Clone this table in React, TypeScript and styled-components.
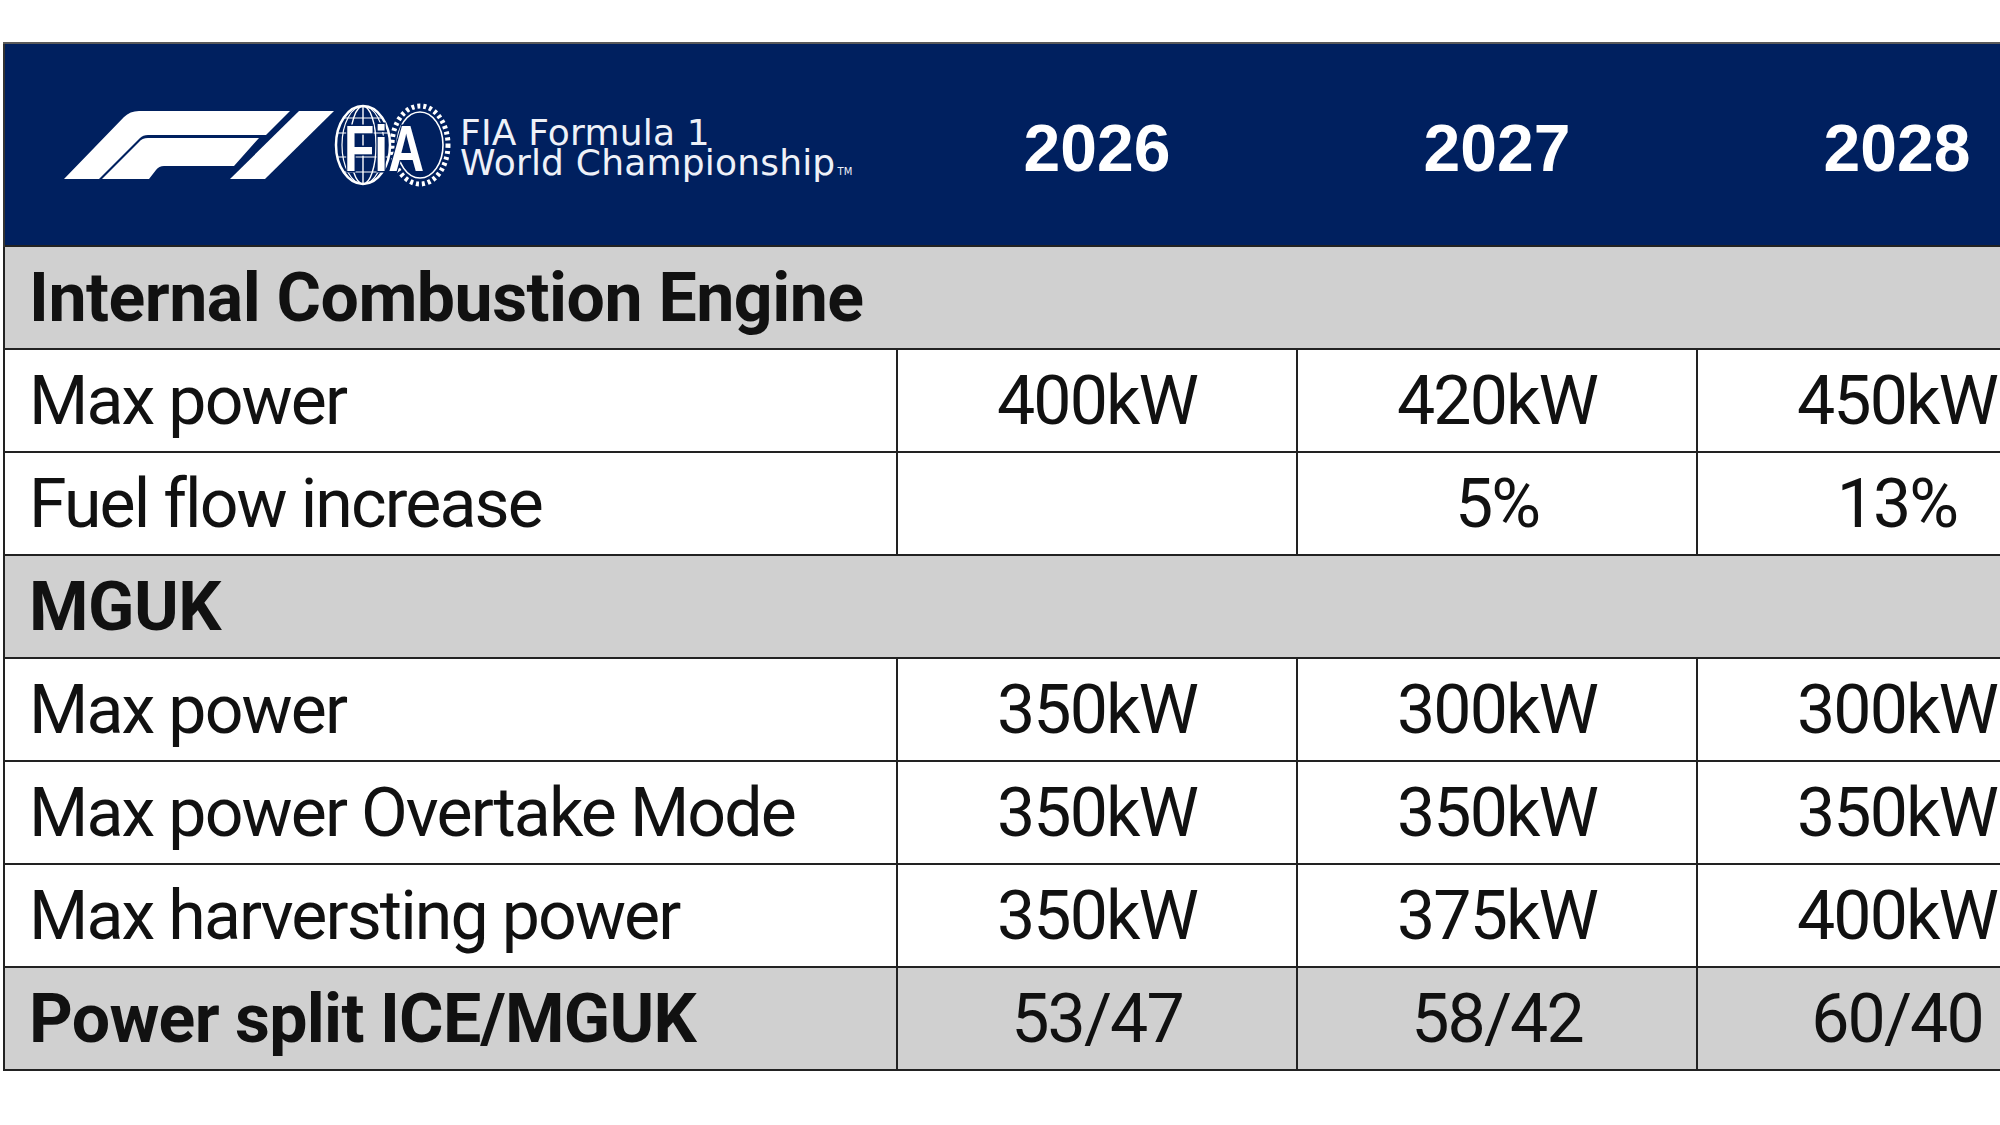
import React from 'react'
import styled, { createGlobalStyle } from 'styled-components'

const GlobalStyle = createGlobalStyle`
  html, body {
    margin: 0;
    padding: 0;
    background: #fff;
    overflow: hidden;
  }
`

const Page = styled.div`
  width: 2000px;
  height: 1125px;
  overflow: hidden;
  box-sizing: border-box;
  padding: 42px 0 0 3px;
`

const Table = styled.table`
  border-collapse: collapse;
  table-layout: fixed;
  width: 2093px;
  font-family: Roboto, 'Liberation Sans', sans-serif;
  color: #111;
`

const HeaderRow = styled.tr`
  height: 203px;
  background: #00205f;
`

const LogoCell = styled.th`
  padding: 0 0 0 59px;
  text-align: left;
  border-left: 2px solid #333;
  border-top: 2px solid #5a5a5a;
`

const YearCell = styled.th`
  padding: 6px 0 0;
  text-align: center;
  font-family: 'Liberation Sans', Arial, sans-serif;
  font-weight: 700;
  font-size: 66px;
  color: #fff;
  border-top: 2px solid #5a5a5a;
`

const Row = styled.tr<{ shaded?: boolean }>`
  height: 103px;
  background: ${props => props.shaded ? '#d0d0d0' : '#fff'};
`

const Cell = styled.td<{ bold?: boolean; label?: boolean }>`
  border: 2px solid #222;
  padding: ${props => props.label ? '0 0 0 24px' : '0'};
  text-align: ${props => props.label ? 'left' : 'center'};
  font-size: 68px;
  font-weight: ${props => props.bold ? 700 : 400};
  letter-spacing: ${props => props.bold ? '-0.7px' : '-1.9px'};
  white-space: nowrap;
  overflow: hidden;
`

const SectionCell = styled.td`
  border: 2px solid #222;
  padding: 0 0 0 24px;
  font-size: 68px;
  font-weight: 700;
  letter-spacing: -0.5px;
  white-space: nowrap;
`

const Brand = styled.div`
  display: flex;
  align-items: center;
`

const BrandText = styled.div`
  margin: 6px 0 0 10px;
  font-family: 'DejaVu Sans', sans-serif;
  font-weight: 400;
  font-size: 36px;
  letter-spacing: 0.2px;
  color: #eef1f8;
  white-space: nowrap;
`

const BrandLine = styled.div`
  line-height: 30px;
  height: 30px;
`

const Tm = styled.span`
  font-size: 10px;
  margin-left: 2px;
`

const F1Logo = () => (
  <svg width="270" height="68" viewBox="0 0 270 68">
    <path
      fill="#fff"
      d="M0 68 L60 6 Q66 0 75 0 L226 0 L202 24 L84 24 Q79 24 76 27 L35 68 Z"
    />
    <path
      fill="#fff"
      d="M38 68 L75 31 Q78 27 84 27 L195 27 L170 55 L100 55 Q95 55 92 59 L85 68 Z"
    />
    <path fill="#fff" d="M235 0 L270 0 L201 68 L166 68 Z" />
  </svg>
)

const FiaEmblem = () => (
  <svg width="116" height="92" viewBox="0 -4 116 92" overflow="visible">
    <g fill="none" stroke="#fff">
      <ellipse cx="86" cy="42" rx="28" ry="39" strokeWidth="5" strokeDasharray="3 3" />
      <ellipse cx="86" cy="42" rx="23" ry="33" strokeWidth="1.6" />
      <ellipse cx="29" cy="42" rx="27" ry="39" strokeWidth="2.5" fill="#00205f" />
      <ellipse cx="29" cy="42" rx="13" ry="39" strokeWidth="1.4" />
      <ellipse cx="29" cy="42" rx="21" ry="39" strokeWidth="1.2" />
      <line x1="29" y1="3" x2="29" y2="81" strokeWidth="1.4" />
      <line x1="3" y1="30" x2="55" y2="30" strokeWidth="1.2" />
      <line x1="3" y1="54" x2="55" y2="54" strokeWidth="1.2" />
      <line x1="10" y1="15" x2="48" y2="15" strokeWidth="1.2" />
      <line x1="10" y1="69" x2="48" y2="69" strokeWidth="1.2" />
    </g>
    <text
      x="10"
      y="68"
      textLength="80"
      lengthAdjust="spacingAndGlyphs"
      fontFamily="'Liberation Sans', Arial, sans-serif"
      fontWeight="700"
      fontSize="64"
      fill="#fff"
      stroke="#00205f"
      strokeWidth="3"
      paintOrder="stroke"
    >
      FiA
    </text>
  </svg>
)

type Line =
  | { kind: 'section'; label: string }
  | { kind: 'data'; label: string; values: string[]; shaded?: boolean }

const years = ['2026', '2027', '2028']

const lines: Line[] = [
  { kind: 'section', label: 'Internal Combustion Engine' },
  { kind: 'data', label: 'Max power', values: ['400kW', '420kW', '450kW'] },
  { kind: 'data', label: 'Fuel flow increase', values: ['', '5%', '13%'] },
  { kind: 'section', label: 'MGUK' },
  { kind: 'data', label: 'Max power', values: ['350kW', '300kW', '300kW'] },
  { kind: 'data', label: 'Max power Overtake Mode', values: ['350kW', '350kW', '350kW'] },
  { kind: 'data', label: 'Max harversting power', values: ['350kW', '375kW', '400kW'] },
  { kind: 'data', label: 'Power split ICE/MGUK', values: ['53/47', '58/42', '60/40'], shaded: true },
]

const App: React.FC = () => {
  return (
    <Page>
      <GlobalStyle />
      <Table>
        <colgroup>
          <col style={{ width: 893 }} />
          <col style={{ width: 400 }} />
          <col style={{ width: 400 }} />
          <col style={{ width: 400 }} />
        </colgroup>
        <thead>
          <HeaderRow>
            <LogoCell>
              <Brand>
                <F1Logo />
                <FiaEmblem />
                <BrandText>
                  <BrandLine>FIA Formula 1</BrandLine>
                  <BrandLine>
                    World Championship<Tm>TM</Tm>
                  </BrandLine>
                </BrandText>
              </Brand>
            </LogoCell>
            {years.map(y => (
              <YearCell key={y}>{y}</YearCell>
            ))}
          </HeaderRow>
        </thead>
        <tbody>
          {lines.map((line, i) =>
            line.kind === 'section' ? (
              <Row key={i} shaded>
                <SectionCell colSpan={4}>{line.label}</SectionCell>
              </Row>
            ) : (
              <Row key={i} shaded={line.shaded}>
                <Cell label bold={line.shaded}>{line.label}</Cell>
                {line.values.map((v, j) => (
                  <Cell key={j}>{v}</Cell>
                ))}
              </Row>
            )
          )}
        </tbody>
      </Table>
    </Page>
  )
}

export default App
